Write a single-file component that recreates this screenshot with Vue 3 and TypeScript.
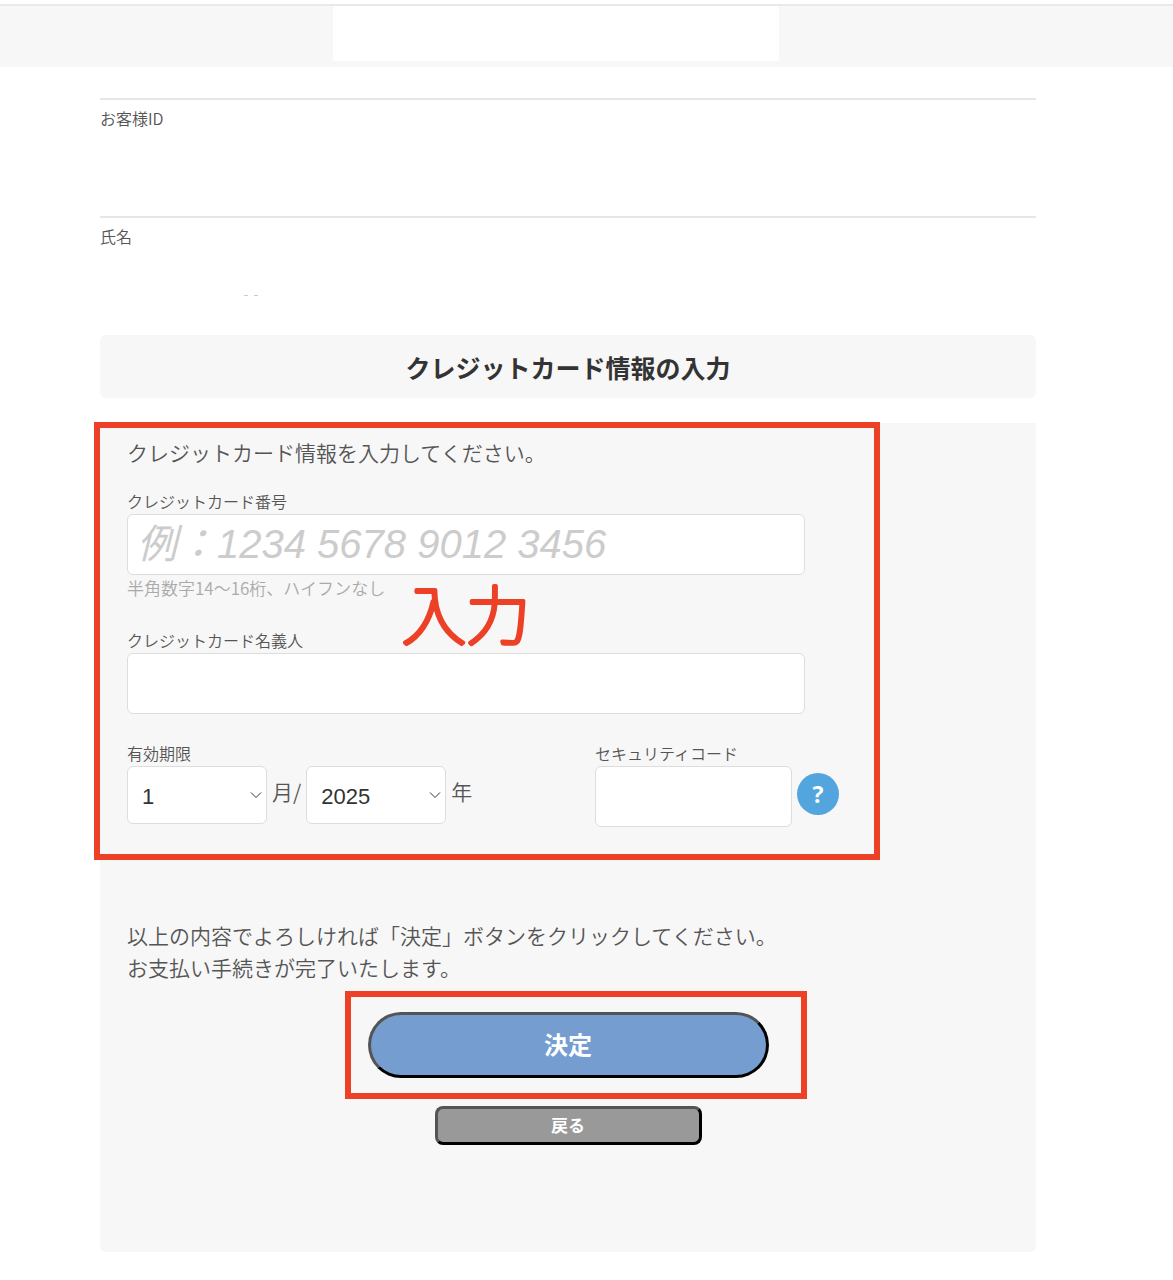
<script setup lang="ts">
import { ref } from 'vue'

const cardNumber = ref('')
const cardHolder = ref('')
const month = ref(1)
const year = ref(2025)
const securityCode = ref('')

const months: number[] = Array.from({ length: 12 }, (_, i) => i + 1)
const years: number[] = Array.from({ length: 10 }, (_, i) => 2025 + i)
</script>

<template>
  <div class="page">
    <header class="site-header">
      <div class="logo-area"></div>
    </header>

    <main class="content">
      <dl class="customer">
        <div class="customer-row">
          <dt>お客様ID</dt>
          <dd></dd>
        </div>
        <div class="customer-row">
          <dt>氏名</dt>
          <dd><span class="trace"></span><span class="trace"></span></dd>
        </div>
      </dl>

      <h1 class="title">クレジットカード情報の入力</h1>

      <form class="panel" @submit.prevent>
        <div class="card-fields">
          <p class="lead">クレジットカード情報を入力してください。</p>

          <div class="field">
            <label for="card-number">クレジットカード番号</label>
            <input id="card-number" v-model="cardNumber" class="box" type="text" inputmode="numeric" placeholder="例：1234 5678 9012 3456" />
            <p class="hint">半角数字14〜16桁、ハイフンなし</p>
          </div>

          <div class="field">
            <label for="card-holder">クレジットカード名義人</label>
            <input id="card-holder" v-model="cardHolder" class="box" type="text" />
          </div>

          <div class="row">
            <div class="expiry">
              <label for="month">有効期限</label>
              <div class="inline">
                <span class="select">
                  <select id="month" v-model="month">
                    <option v-for="m in months" :key="m" :value="m">{{ m }}</option>
                  </select>
                  <svg viewBox="0 0 12 8" aria-hidden="true"><path d="M1 1.5 6 6.5 11 1.5" /></svg>
                </span>
                <span class="unit">月/</span>
                <span class="select">
                  <select v-model="year" aria-label="年">
                    <option v-for="y in years" :key="y" :value="y">{{ y }}</option>
                  </select>
                  <svg viewBox="0 0 12 8" aria-hidden="true"><path d="M1 1.5 6 6.5 11 1.5" /></svg>
                </span>
                <span class="unit">年</span>
              </div>
            </div>

            <div class="security">
              <label for="security-code">セキュリティコード</label>
              <div class="inline">
                <input id="security-code" v-model="securityCode" class="box" type="text" inputmode="numeric" />
                <button class="help" type="button">?</button>
              </div>
            </div>
          </div>

          <svg class="note" width="140" height="80" role="img" aria-label="入力">
            <text x="4" y="60">入力</text>
          </svg>
        </div>

        <p class="confirm">以上の内容でよろしければ「決定」ボタンをクリックしてください。<br />お支払い手続きが完了いたします。</p>

        <div class="actions">
          <div class="submit-wrap">
            <button class="submit" type="submit">決定</button>
          </div>
          <button class="back" type="button">戻る</button>
        </div>
      </form>
    </main>
  </div>
</template>

<style>
body {
  margin: 0;
  background: #fff;
}
</style>

<style scoped>
.page {
  padding-top: 4px;
  color: #555;
  font-family: "Noto Sans CJK JP", sans-serif;
  font-weight: 350;
  font-size: 16px;
  line-height: 24px;
}

.page * {
  box-sizing: border-box;
}

.site-header {
  border-top: 2px solid #e9e9e9;
  padding: 0 calc(33% + 7px) 6px 333px;
  background: #f7f7f7;
}

.logo-area {
  height: 55px;
  background: #fff;
}

.content {
  margin: 31px 137px 28px 100px;
}

.customer,
.customer dd,
p {
  margin: 0;
}

.customer-row {
  height: 118px;
  padding-top: 6px;
  border-top: 2px solid #e6e6e6;
}

.customer-row dd {
  display: flex;
  gap: 6px;
  padding: 47px 0 0 144px;
}

.trace {
  width: 4px;
  height: 1px;
  background: #ccc;
}

.title {
  margin: 1px 0 25px;
  padding: 15px 15px 14px;
  border-radius: 6px;
  background: #f7f7f7;
  color: #333;
  font-size: 25px;
  font-weight: 700;
  line-height: 34px;
  text-align: center;
}

.panel {
  padding-bottom: 107px;
  border-radius: 0 0 6px 6px;
  background: #f7f7f7;
}

.card-fields {
  position: relative;
  width: calc(100% - 156px);
  padding: 13px 41px 33px 27px;
}

.card-fields::after {
  content: "";
  position: absolute;
  inset: -1px 0 0 -6px;
  border: 6px solid #ec4127;
  pointer-events: none;
}

.lead {
  margin-bottom: 22px;
  font-size: 21px;
  line-height: 32px;
}

.field {
  margin: 0 34px 28px 0;
}

label {
  display: block;
  padding-bottom: 2px;
  line-height: 22px;
}

.box,
select {
  display: block;
  width: 100%;
  margin: 0;
  border: 1px solid #ddd;
  border-radius: 6px;
  background: #fff;
  color: #444;
}

.box {
  height: 61px;
  padding: 0 9px;
  font: 40px "Liberation Sans", "Noto Sans CJK JP", sans-serif;
}

.box::placeholder {
  color: #ccc;
  font-style: italic;
  opacity: 1;
}

.hint {
  color: #aaa;
  font-size: 17px;
  line-height: 26px;
}

.row {
  display: flex;
  justify-content: space-between;
}

.inline {
  display: flex;
  align-items: center;
  gap: 5px;
}

.select {
  position: relative;
  width: 140px;
}

select {
  height: 58px;
  padding: 2px 30px 0 14px;
  appearance: none;
  color: #333;
  font: 22px "Liberation Sans", sans-serif;
}

.select svg {
  position: absolute;
  top: 25px;
  right: 5px;
  width: 12px;
  height: 8px;
  fill: none;
  stroke: #333;
  pointer-events: none;
}

.unit {
  padding-bottom: 8px;
  font-size: 21px;
  line-height: 32px;
}

.security {
  width: 244px;
}

.help {
  flex: none;
  width: 42px;
  height: 42px;
  margin: 0 0 5px;
  padding: 0;
  border: 0;
  border-radius: 50%;
  background: #53a5de;
  color: #fff;
  font: 700 23px "Open Sans", sans-serif;
}

.note {
  position: absolute;
  top: 156px;
  left: 298px;
  overflow: visible;
  pointer-events: none;
}

.note text {
  fill: #ec4127;
  stroke: #ec4127;
  stroke-width: 4px;
  stroke-linejoin: round;
  font-size: 64px;
  font-weight: 100;
}

.confirm {
  margin: 59px 27px 0;
  font-size: 21px;
  line-height: 32px;
}

.actions {
  display: flex;
  flex-direction: column;
  align-items: center;
  gap: 28px;
  padding-top: 29px;
}

.submit-wrap {
  position: relative;
  width: 401px;
}

.submit-wrap::after {
  content: "";
  position: absolute;
  inset: -21px -38px -21px -23px;
  border: 6px solid #ec4127;
  pointer-events: none;
}

.submit,
.back {
  display: block;
  margin: 0;
  padding: 0 0 3px;
  border: 3px outset #000;
  color: #fff;
  font-family: inherit;
  font-weight: 700;
}

.submit {
  width: 100%;
  height: 66px;
  border-radius: 33px;
  background: #769dd0;
  font-size: 24px;
}

.back {
  width: 267px;
  height: 39px;
  border-radius: 8px;
  background: #999;
  font-size: 17px;
}
</style>
